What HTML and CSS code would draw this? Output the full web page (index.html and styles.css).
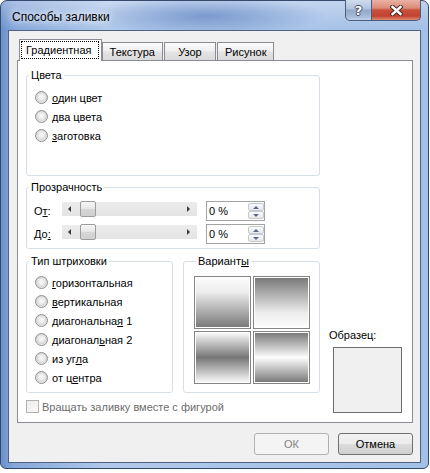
FILE: index.html
```html
<!DOCTYPE html>
<html lang="ru">
<head>
    <meta charset="UTF-8">
    <title>Способы заливки</title>
    <link rel="stylesheet" href="styles.css">
</head>
<body>
    <div class="window">
        <div class="titlebar">
            <span class="title">Способы заливки</span>
            <div class="caption-buttons">
                <span class="cap-btn help">?</span>
                <span class="cap-btn close">
                    <svg width="13" height="11" viewBox="0 0 13 11">
                        <path d="M2.5 2 L10.5 9 M10.5 2 L2.5 9" stroke="#4a2a26" stroke-width="4.4" stroke-linecap="square"/>
                        <path d="M2.5 2 L10.5 9 M10.5 2 L2.5 9" stroke="#fff" stroke-width="2.4" stroke-linecap="square"/>
                    </svg>
                </span>
            </div>
        </div>
        <div class="client">
            <div class="tabs">
                <div class="tab active"><span class="focus">Градиентная</span></div>
                <div class="tab">Текстура</div>
                <div class="tab">Узор</div>
                <div class="tab">Рисунок</div>
            </div>
            <div class="panel">
                <div class="left">
                    <fieldset class="group colors">
                        <legend>Цвета</legend>
                        <label class="option"><span class="radio"></span><span><u>о</u>дин цвет</span></label>
                        <label class="option"><span class="radio"></span><span><u>д</u>ва цвета</span></label>
                        <label class="option"><span class="radio"></span><span><u>з</u>аготовка</span></label>
                    </fieldset>
                    <fieldset class="group transparency">
                        <legend>Прозрачность</legend>
                        <div class="slider-row">
                            <span class="slider-label">О<u>т</u>:</span>
                            <div class="slider">
                                <span class="arrow arrow-l"></span>
                                <span class="thumb"></span>
                                <span class="arrow arrow-r"></span>
                            </div>
                            <div class="spin">
                                <span class="spin-value">0 %</span>
                                <span class="spin-buttons"><span class="spin-up"></span><span class="spin-down"></span></span>
                            </div>
                        </div>
                        <div class="slider-row">
                            <span class="slider-label">До<u>:</u></span>
                            <div class="slider">
                                <span class="arrow arrow-l"></span>
                                <span class="thumb"></span>
                                <span class="arrow arrow-r"></span>
                            </div>
                            <div class="spin">
                                <span class="spin-value">0 %</span>
                                <span class="spin-buttons"><span class="spin-up"></span><span class="spin-down"></span></span>
                            </div>
                        </div>
                    </fieldset>
                    <div class="group-row">
                        <fieldset class="group hatch">
                            <legend>Тип штриховки</legend>
                            <label class="option"><span class="radio"></span><span><u>г</u>оризонтальная</span></label>
                            <label class="option"><span class="radio"></span><span><u>в</u>ертикальная</span></label>
                            <label class="option"><span class="radio"></span><span>диагональна<u>я</u> 1</span></label>
                            <label class="option"><span class="radio"></span><span>диагонал<u>ь</u>ная 2</span></label>
                            <label class="option"><span class="radio"></span><span>из уг<u>л</u>а</span></label>
                            <label class="option"><span class="radio"></span><span>от ц<u>е</u>нтра</span></label>
                        </fieldset>
                        <fieldset class="group variants">
                            <legend>Вариант<u>ы</u></legend>
                            <div class="swatches">
                                <span class="swatch swatch-1"></span>
                                <span class="swatch swatch-2"></span>
                                <span class="swatch swatch-3"></span>
                                <span class="swatch swatch-4"></span>
                            </div>
                        </fieldset>
                    </div>
                    <label class="check-row"><span class="checkbox"></span>Вращать заливку вместе с фигурой</label>
                </div>
                <div class="right">
                    <span class="sample-label">Образец:</span>
                    <div class="sample"></div>
                </div>
            </div>
            <div class="buttons">
                <button class="btn" disabled>ОК</button>
                <button class="btn">Отмена</button>
            </div>
        </div>
    </div>
</body>
</html>
```
FILE: styles.css
```css
*{
    box-sizing: border-box;
}
body{
    margin: 0;
    background: #fff;
    font: 11px "Liberation Sans", Arial, sans-serif;
    color: #000;
}

/* окно */
.window{
    width: 429px;
    height: 469px;
    border: 1px solid #34496b;
    border-radius: 7px 7px 6px 6px;
    padding: 0 7px 5px;
    display: flex;
    flex-direction: column;
    background:
        radial-gradient(ellipse 120px 20px at 205px 15px, rgba(60,100,175,.5), rgba(60,100,175,0)),
        linear-gradient(to bottom, rgba(255,255,255,.3), rgba(255,255,255,0) 28px),
        linear-gradient(to right, #6a8fcb 0, #86a7d9 3%, #b1c9eb 25%, #a9c4e8 70%, #a3c0e6 100%);
}
.titlebar{
    height: 29px;
    display: flex;
    align-items: flex-start;
    padding-left: 4px;
}
.title{
    margin-top: 9px;
    font-size: 12px;
    line-height: 15px;
    text-shadow: 0 0 6px #fff, 0 0 10px rgba(255,255,255,.8);
}
.caption-buttons{
    margin-left: auto;
    margin-top: -1px;
    display: flex;
}
.cap-btn{
    height: 21px;
    border: 1px solid #4a5d7c;
    border-top: none;
    display: flex;
    align-items: center;
    justify-content: center;
}
.help{
    width: 27px;
    border-radius: 0 0 0 5px;
    background: linear-gradient(#d0dcee, #b0c2dd 45%, #93a9c9 50%, #a7bcda 85%, #c3d3ea);
    color: #fff;
    font: bold 13px "DejaVu Sans", sans-serif;
    text-shadow: -1px 0 #3b4a63, 1px 0 #3b4a63, 0 -1px #3b4a63, 0 1px #3b4a63;
}
.close{
    width: 49px;
    border-left: none;
    border-radius: 0 0 5px 0;
    background: linear-gradient(#eab1a4, #dc8c78 40%, #c7503b 50%, #c24330 80%, #de8a73);
}

/* клиентская часть */
.client{
    flex: 1;
    border: 1px solid #4e6381;
    background: #f0f0f0;
    padding: 8px 7px 7px 8px;
    display: flex;
    flex-direction: column;
}
.tabs{
    display: flex;
    align-items: flex-end;
    gap: 1px;
    padding-left: 2px;
    position: relative;
    z-index: 1;
}
.tab{
    height: 18px;
    border: 1px solid #898c95;
    border-bottom: none;
    padding: 1px 7px 0;
    min-width: 52px;
    text-align: center;
    line-height: 16px;
    background: linear-gradient(#fbfbfb, #efefef 45%, #e3e3e3 55%, #dadada);
}
.tab.active{
    height: 22px;
    margin-bottom: -1px;
    margin-right: -1px;
    padding: 1px 2px 0 1px;
    background: #fff;
}
.focus{
    display: block;
    height: 18px;
    border: 1px dotted #000;
    padding: 0 6px 0 4px;
    line-height: 17px;
}
.panel{
    height: 363px;
    background: #fff;
    border: 1px solid #898c95;
    padding: 7px 0 6px 8px;
    display: flex;
}
.left{
    width: 294px;
    display: flex;
    flex-direction: column;
}
.group{
    margin: 0;
    padding: 0;
    min-width: 0;
    border: 1px solid #d5dfe5;
    border-radius: 3px;
}
.group legend{
    margin-left: 2px;
    padding: 0 2px;
    line-height: 15px;
}
.option{
    display: flex;
    align-items: center;
    gap: 4px;
    height: 19px;
    padding-left: 8px;
}
.radio{
    width: 13px;
    height: 13px;
    border-radius: 50%;
    border: 1px solid #8e8f8f;
    background: radial-gradient(circle at 50% 45%, #fbfbfb 0, #ebebeb 3px, #d6d6d6 5px, #f4f4f4 6px);
}
.colors{
    height: 108px;
    padding-top: 5px;
}
.transparency{
    margin-top: 4px;
    height: 69px;
    padding-top: 6px;
}
.slider-row{
    display: flex;
    align-items: flex-start;
    height: 20px;
    padding-left: 7px;
}
.slider-row + .slider-row{
    margin-top: 3px;
}
.slider-label{
    width: 28px;
    line-height: 20px;
}
.slider{
    width: 135px;
    height: 14px;
    margin-top: 1px;
    display: flex;
    align-items: center;
    background: linear-gradient(#ececec, #e4e4e4);
}
.arrow{
    width: 0;
    height: 0;
    border-top: 3px solid transparent;
    border-bottom: 3px solid transparent;
}
.arrow-l{
    margin-left: 6px;
    border-right: 3px solid #3c3c3c;
}
.arrow-r{
    margin-left: auto;
    margin-right: 7px;
    border-left: 3px solid #3c3c3c;
}
.thumb{
    width: 16px;
    height: 16px;
    margin-left: 9px;
    border: 1px solid #9c9c9c;
    border-radius: 2px;
    background: linear-gradient(#f6f6f6, #e6e6e6 50%, #d6d6d6 51%, #d0d0d0);
}
.spin{
    width: 59px;
    height: 20px;
    margin-left: 9px;
    border: 1px solid #a3a3a3;
    background: #fff;
    display: flex;
    padding: 1px 0 1px 2px;
}
.spin-value{
    line-height: 17px;
}
.spin-buttons{
    margin-left: auto;
    width: 16px;
    display: flex;
    flex-direction: column;
}
.spin-up, .spin-down{
    flex: 1;
    border: 1px solid #c3c9d1;
    border-radius: 2px;
    background: linear-gradient(#fbfbfb, #e8e8e8);
    display: flex;
    align-items: center;
    justify-content: center;
}
.spin-up::after, .spin-down::after{
    content: "";
    border-left: 3px solid transparent;
    border-right: 3px solid transparent;
}
.spin-up::after{
    border-bottom: 3px solid #56698c;
}
.spin-down::after{
    border-top: 3px solid #56698c;
}
.group-row{
    margin-top: 5px;
    display: flex;
    gap: 10px;
    height: 139px;
}
.hatch{
    width: 147px;
    padding-top: 4px;
}
.variants{
    flex: 1;
    padding: 7px 0 0 10px;
}
.swatches{
    display: grid;
    grid-template-columns: 57px 57px;
    grid-template-rows: 53px 53px;
    gap: 2px;
}
.swatch{
    border: 1px solid #858585;
    box-shadow: inset 0 0 0 1px #fff;
}
.swatch-1{
    background: linear-gradient(#fdfdfd, #ececec 30%, #767676);
}
.swatch-2{
    background: linear-gradient(#767676, #ececec 70%, #fdfdfd);
}
.swatch-3{
    background: linear-gradient(#fdfdfd, #767676 50%, #fdfdfd);
}
.swatch-4{
    background: linear-gradient(#767676, #fdfdfd 50%, #767676);
}
.check-row{
    margin-top: 4px;
    height: 19px;
    display: flex;
    align-items: center;
    gap: 3px;
    color: #6d6d6d;
}
.checkbox{
    width: 13px;
    height: 13px;
    border: 1px solid #b1b1b1;
    background: linear-gradient(135deg, #ececec, #fafafa);
}
.right{
    flex: 1;
    display: flex;
    flex-direction: column;
    justify-content: flex-end;
    padding: 0 0 3px 9px;
}
.sample-label{
    line-height: 15px;
}
.sample{
    width: 69px;
    height: 66px;
    margin: 4px 0 0 4px;
    border: 1px solid #6d6d6d;
    background: #f0f0f0;
}

/* кнопки */
.buttons{
    margin-top: 10px;
    display: flex;
    justify-content: flex-end;
    gap: 9px;
}
.btn{
    width: 75px;
    height: 22px;
    padding: 0;
    font: inherit;
    color: #000;
    border: 1px solid #707070;
    border-radius: 3px;
    background: linear-gradient(#f2f2f2, #ebebeb 50%, #dddddd 50%, #cfcfcf);
}
.btn:disabled{
    color: #838383;
    border-color: #adb2b5;
    background: #f4f4f4;
}
```
